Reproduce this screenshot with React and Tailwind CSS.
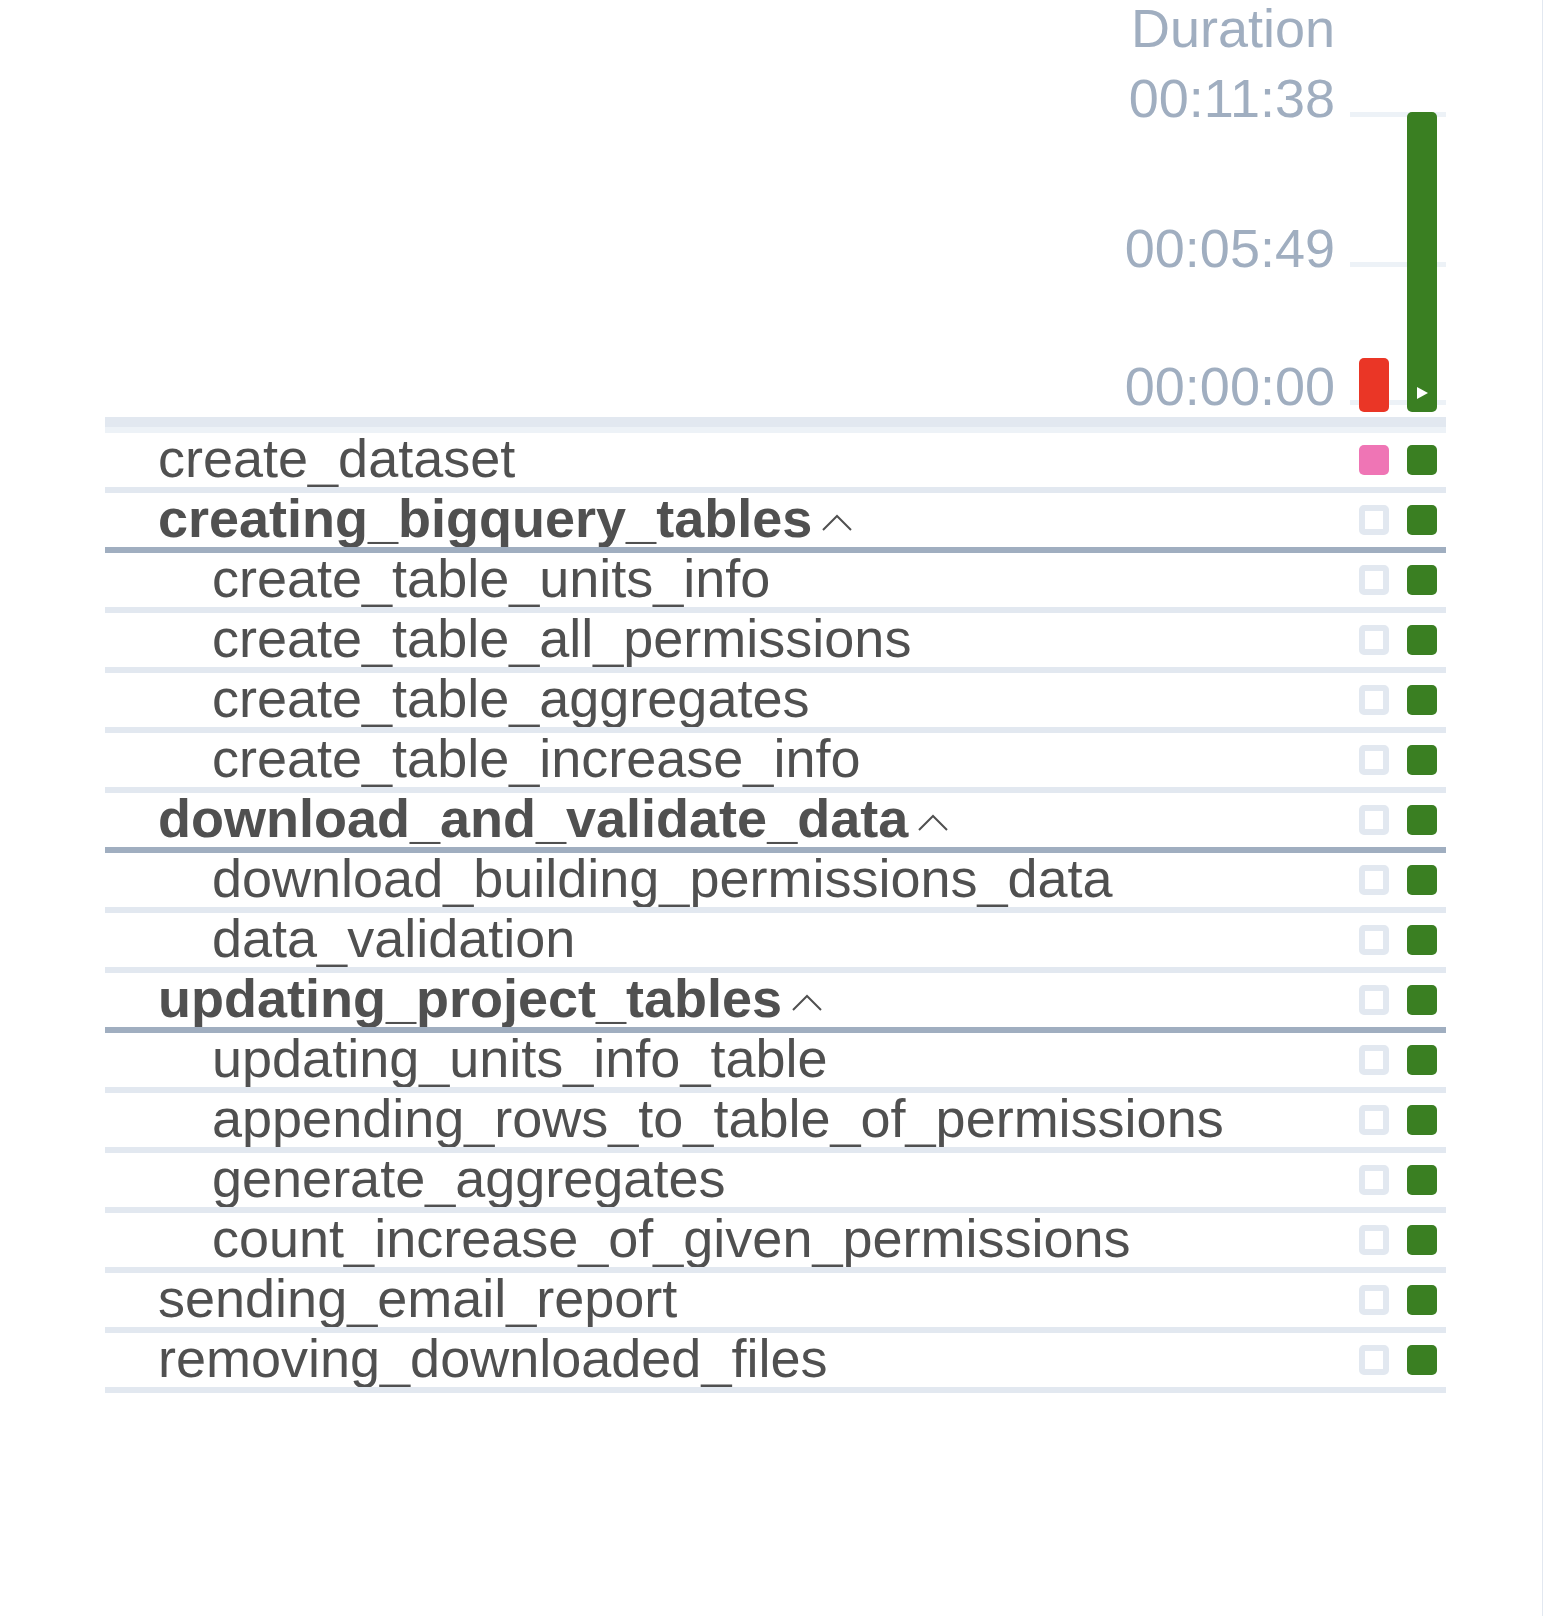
const tasks = [
  { name: 'create_dataset', level: 0, first: 'pink' },
  { name: 'creating_bigquery_tables', level: 0, group: true },
  { name: 'create_table_units_info', level: 1 },
  { name: 'create_table_all_permissions', level: 1 },
  { name: 'create_table_aggregates', level: 1 },
  { name: 'create_table_increase_info', level: 1 },
  { name: 'download_and_validate_data', level: 0, group: true },
  { name: 'download_building_permissions_data', level: 1 },
  { name: 'data_validation', level: 1 },
  { name: 'updating_project_tables', level: 0, group: true },
  { name: 'updating_units_info_table', level: 1 },
  { name: 'appending_rows_to_table_of_permissions', level: 1 },
  { name: 'generate_aggregates', level: 1 },
  { name: 'count_increase_of_given_permissions', level: 1 },
  { name: 'sending_email_report', level: 0 },
  { name: 'removing_downloaded_files', level: 0 },
];

const Chevron = () => (
  <svg width="30" height="17" viewBox="0 0 30 17" className="ml-[10px] mt-[21px] shrink-0" fill="none">
    <polyline points="1,16 15,2 29,16" stroke="#505050" strokeWidth="2" />
  </svg>
);

const TimeRow = ({ label, className }) => (
  <div className={`flex items-end gap-[15px] ${className}`}>
    <span className="leading-[56px]">{label}</span>
    <div className="mb-[9px] h-[5px] w-[96px] bg-[#edf2f7]" />
  </div>
);

const TaskRow = ({ task }) => (
  <div
    className={`flex h-[60px] justify-between border-b-[6px] ${
      task.group ? 'border-[#a0aec0]' : 'border-[#e2e8f0]'
    }`}
  >
    <div
      className={`flex h-[54px] items-start overflow-hidden ${
        task.level ? 'pl-[107px]' : 'pl-[53px]'
      } ${task.group ? 'font-bold' : ''}`}
    >
      <span className="whitespace-nowrap leading-[50px]">{task.name}</span>
      {task.group && <Chevron />}
    </div>
    <div className="flex h-[54px] w-[96px] shrink-0 items-center gap-[18px] px-[9px]">
      {task.first === 'pink' ? (
        <div className="h-[30px] w-[30px] rounded-[5px] bg-[#ef75b5]" />
      ) : (
        <div className="h-[30px] w-[30px] rounded-[5px] border-[6px] border-[#e2e8f0] bg-white" />
      )}
      <div className="h-[30px] w-[30px] rounded-[5px] bg-[#3a7f22]" />
    </div>
  </div>
);

export default function App() {
  return (
    <div
      className="min-h-screen border-r border-[#e2e8f0] bg-white pl-[105px] pr-[96px] text-[54px] text-[#505050]"
      style={{ fontFamily: '"Liberation Sans", Arial, sans-serif' }}
    >
      <div className="relative flex h-[417px] flex-col items-end text-[#a0aec0]">
        <div className="pr-[111px] leading-[56px]">Duration</div>
        <TimeRow label="00:11:38" className="mt-[14px]" />
        <TimeRow label="00:05:49" className="mt-[94px]" />
        <TimeRow label="00:00:00" className="mt-[82px]" />
        <div className="absolute bottom-[5px] right-0 flex items-end gap-[18px] px-[9px]">
          <div className="h-[54px] w-[30px] rounded-[5px] bg-[#ea3626]" />
          <div className="flex h-[300px] w-[30px] items-end justify-center rounded-[5px] bg-[#3a7f22] pb-[13px]">
            <svg width="11" height="12" viewBox="0 0 11 12">
              <polygon points="0,0 11,6 0,12" fill="white" />
            </svg>
          </div>
        </div>
      </div>
      <div className="h-[10px] bg-[#e2e8f0]" />
      <div className="h-[6px] bg-[#edf2f7]" />
      {tasks.map((t) => (
        <TaskRow key={t.name} task={t} />
      ))}
    </div>
  );
}
